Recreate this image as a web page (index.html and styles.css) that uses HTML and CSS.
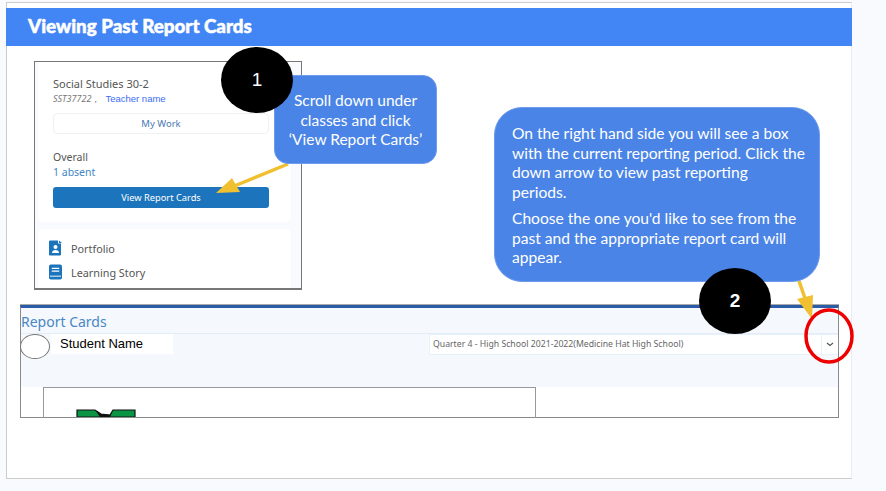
FILE: index.html
```html
<!DOCTYPE html>
<html lang="en">
<head>
    <meta charset="UTF-8">
    <title>Viewing Past Report Cards</title>
    <link rel="stylesheet" href="styles.css">
</head>
<body>
    <main class="slide">
        <h1 class="slide-title">Viewing Past Report Cards</h1>

        <div class="class-shot">
            <div class="class-card">
                <div class="class-name">Social Studies 30-2</div>
                <div class="class-meta"><em>SST37722，</em><span class="teacher">Teacher name</span></div>
                <div class="my-work">My Work</div>
                <div class="overall">Overall</div>
                <div class="absent">1 absent</div>
                <div class="view-cards">View Report Cards</div>
            </div>
            <div class="class-links">
                <div class="link-row">
                    <svg class="link-icon" viewBox="0 0 13 15">
                        <path d="M1 0h8v3h3v11a1 1 0 0 1-1 1H1a1 1 0 0 1-1-1V1a1 1 0 0 1 1-1z" fill="#1c75bc"/>
                        <path d="M10 0l3 2.500h-3z" fill="#1c75bc"/>
                        <circle cx="6.500" cy="6.500" r="2" fill="#fff"/>
                        <path d="M3 12.500c0-2 1.500-3 3.500-3s3.500 1 3.500 3z" fill="#fff"/>
                    </svg>
                    Portfolio
                </div>
                <div class="link-row">
                    <svg class="link-icon" viewBox="0 0 14 16">
                        <rect width="14" height="16" rx="2" fill="#1c75bc"/>
                        <path d="M3 4h8M3 7h8" stroke="#fff" stroke-width="1.300"/>
                        <path d="M1 12.500h12" stroke="#fff" stroke-width="1"/>
                    </svg>
                    Learning Story
                </div>
            </div>
        </div>

        <div class="report-shot">
            <div class="report-top">
                <div class="report-title">Report Cards</div>
                <div class="report-controls">
                    <span class="avatar"></span>
                    <span class="student">Student Name</span>
                    <div class="period">
                        <span class="period-text">Quarter 4 - High School 2021-2022(Medicine Hat High School)</span>
                        <span class="period-arrow">
                            <svg width="8" height="5" viewBox="0 0 8 5"><path d="M1 1l3 2.500L7 1" fill="none" stroke="#555" stroke-width="1.200"/></svg>
                        </span>
                    </div>
                </div>
            </div>
            <div class="report-doc">
                <svg class="school-logo" width="60" height="8" viewBox="0 0 60 8">
                    <path d="M1 8V1h18l6 4 9 1 3-5h22v7z" fill="#0b9444" stroke="#111" stroke-width="1.200"/>
                    <path d="M19 1l6 4 9 1 3-5 -3 7H24z" fill="#111"/>
                </svg>
            </div>
        </div>

        <svg class="marks" width="886" height="491" viewBox="0 0 886 491">
            <path d="M288 164L232 187" stroke="#f0c031" stroke-width="3.500"/>
            <path d="M216 193L232 178L240 192z" fill="#f0c031"/>
            <path d="M799 281L807 304" stroke="#f0c031" stroke-width="3.500"/>
            <path d="M812 319L797 299L813 295z" fill="#f0c031"/>
            <ellipse cx="829" cy="336" rx="23" ry="26" fill="none" stroke="#ee0000" stroke-width="3.500"/>
        </svg>

        <div class="bubble bubble-one">Scroll down under<br>classes and click<br>‘View Report Cards’</div>
        <div class="bubble bubble-two">
            <p>On the right hand side you will see a box with the current reporting period. Click the down arrow to view past reporting<br>periods.</p>
            <p>Choose the one you'd like to see from the past and the appropriate report card will appear.</p>
        </div>
        <div class="step step-one">1</div>
        <div class="step step-two">2</div>
    </main>
</body>
</html>
```

FILE: styles.css
```css
* {
    box-sizing: border-box;
}
html, body {
    height: 100%;
}
body {
    margin: 0;
    padding: 2px 0 0 6px;
    background: #f8fafd;
    font-family: "Noto Sans", sans-serif;
    overflow: hidden;
}
.slide {
    width: 846px;
    height: 477px;
    background: white;
    border: 1px solid #cccccc;
    border-right-color: #e8ebef;
    padding-top: 5px;
}
.slide-title {
    margin: 0 -1px 0 -1px;
    height: 38px;
    padding: 0 0 0 22px;
    background: #4285f4;
    color: white;
    font-family: "Lato", sans-serif;
    font-size: 18.800px;
    font-weight: 900;
    line-height: 36px;
    -webkit-text-stroke: 0.5px white;
}

/* screenshot of the class page */
.class-shot {
    width: 268px;
    height: 229px;
    margin: 15px 0 0 27px;
    padding: 0 10px 0 3px;
    background: #f8fafd;
    border: 1px solid #777777;
    border-bottom-width: 2px;
    color: #555555;
}
.class-card {
    height: 160px;
    padding: 14px 15px 0 15px;
    background: white;
    border-radius: 0 0 5px 5px;
}
.class-name {
    font-size: 11px;
    line-height: 16px;
}
.class-meta {
    font-size: 9px;
    line-height: 14px;
    color: #777777;
}
.teacher {
    color: #3b6ef5;
    font-family: "Liberation Sans", sans-serif;
    font-size: 9.500px;
    margin-left: 5px;
}
.my-work {
    width: 216px;
    height: 21px;
    margin-top: 7px;
    border: 1px solid #eef0f3;
    border-radius: 4px;
    color: #4a7ab5;
    font-size: 9.500px;
    line-height: 19px;
    text-align: center;
}
.overall {
    margin-top: 16px;
    font-size: 10.500px;
    line-height: 15px;
}
.absent {
    font-size: 10.500px;
    line-height: 15px;
    color: #3f86c6;
}
.view-cards {
    width: 216px;
    height: 21px;
    margin-top: 7px;
    background: #1c75bc;
    border-radius: 3px;
    color: white;
    font-size: 9.300px;
    line-height: 21px;
    text-align: center;
}
.class-links {
    height: 59px;
    margin-top: 7px;
    padding-top: 7px;
    background: white;
    border-radius: 5px 5px 0 0;
}
.link-row {
    display: flex;
    align-items: center;
    gap: 9px;
    height: 24px;
    padding-left: 11px;
    font-size: 10.800px;
}
.link-icon {
    width: 13px;
    height: 16px;
}

/* screenshot of the report cards page */
.report-shot {
    width: 819px;
    height: 113px;
    margin: 15px 0 0 13px;
    background: white;
    border: 1px solid #8a8a8a;
    border-top: 3px solid #2a5ca8;
    box-shadow: 0 -1px 0 #aaaaaa;
}
.report-top {
    height: 79px;
    background: #f5f9fd;
}
.report-title {
    height: 26px;
    padding-top: 4px;
    border-bottom: 1px solid #e3edf7;
    color: #4a86c5;
    font-size: 14px;
    line-height: 20px;
}
.report-controls {
    display: flex;
    align-items: flex-start;
}
.avatar {
    flex: none;
    width: 30px;
    height: 25px;
    margin-left: -1px;
    background: white;
    border: 1px solid #777777;
    border-radius: 50%;
}
.student {
    width: 122px;
    height: 20px;
    margin-left: 1px;
    padding-left: 9px;
    background: white;
    color: black;
    font-family: "Liberation Sans", sans-serif;
    font-size: 13px;
    line-height: 19px;
}
.period {
    display: flex;
    justify-content: space-between;
    width: 409px;
    flex: 1;
    height: 21px;
    margin-left: 256px;
    background: white;
    border: 1px solid #e8f0f8;
    border-right: 0;
}
.period-text {
    padding-left: 3px;
    color: #666666;
    font-size: 8.700px;
    line-height: 19px;
}
.period-arrow {
    display: flex;
    align-items: center;
    justify-content: center;
    width: 17px;
    border-left: 1px solid #e8f0f8;
}
.report-doc {
    position: relative;
    width: 493px;
    height: 31px;
    margin-left: 22px;
    border: 1px solid #999999;
    border-bottom: 0;
    overflow: hidden;
}
.school-logo {
    display: block;
    margin: 21px 0 0 32px;
}

/* annotations placed over the slide */
.marks {
    position: absolute;
    left: 0;
    top: 0;
    pointer-events: none;
}
.bubble {
    position: absolute;
    background: #4a84e6;
    border: 1px solid #6f9cec;
    color: white;
    font-family: "Lato", sans-serif;
    font-size: 15.500px;
    line-height: 19.500px;
}
.bubble p {
    margin: 0 0 7px 0;
}
.bubble-one {
    left: 274px;
    top: 75px;
    width: 163px;
    height: 89px;
    padding-top: 15px;
    border-radius: 14px;
    text-align: center;
}
.bubble-two {
    left: 494px;
    top: 107px;
    width: 326px;
    height: 175px;
    padding: 16px 8px 16px 17px;
    border-radius: 28px;
    font-size: 15.600px;
}
.step {
    position: absolute;
    width: 72px;
    height: 66px;
    background: black;
    border-radius: 50%;
    color: white;
    font-family: "Liberation Sans", sans-serif;
    font-size: 19px;
    line-height: 66px;
    text-align: center;
}
.step-one {
    left: 221px;
    top: 47px;
}
.step-two {
    left: 699px;
    top: 268px;
    font-weight: bold;
}
```
